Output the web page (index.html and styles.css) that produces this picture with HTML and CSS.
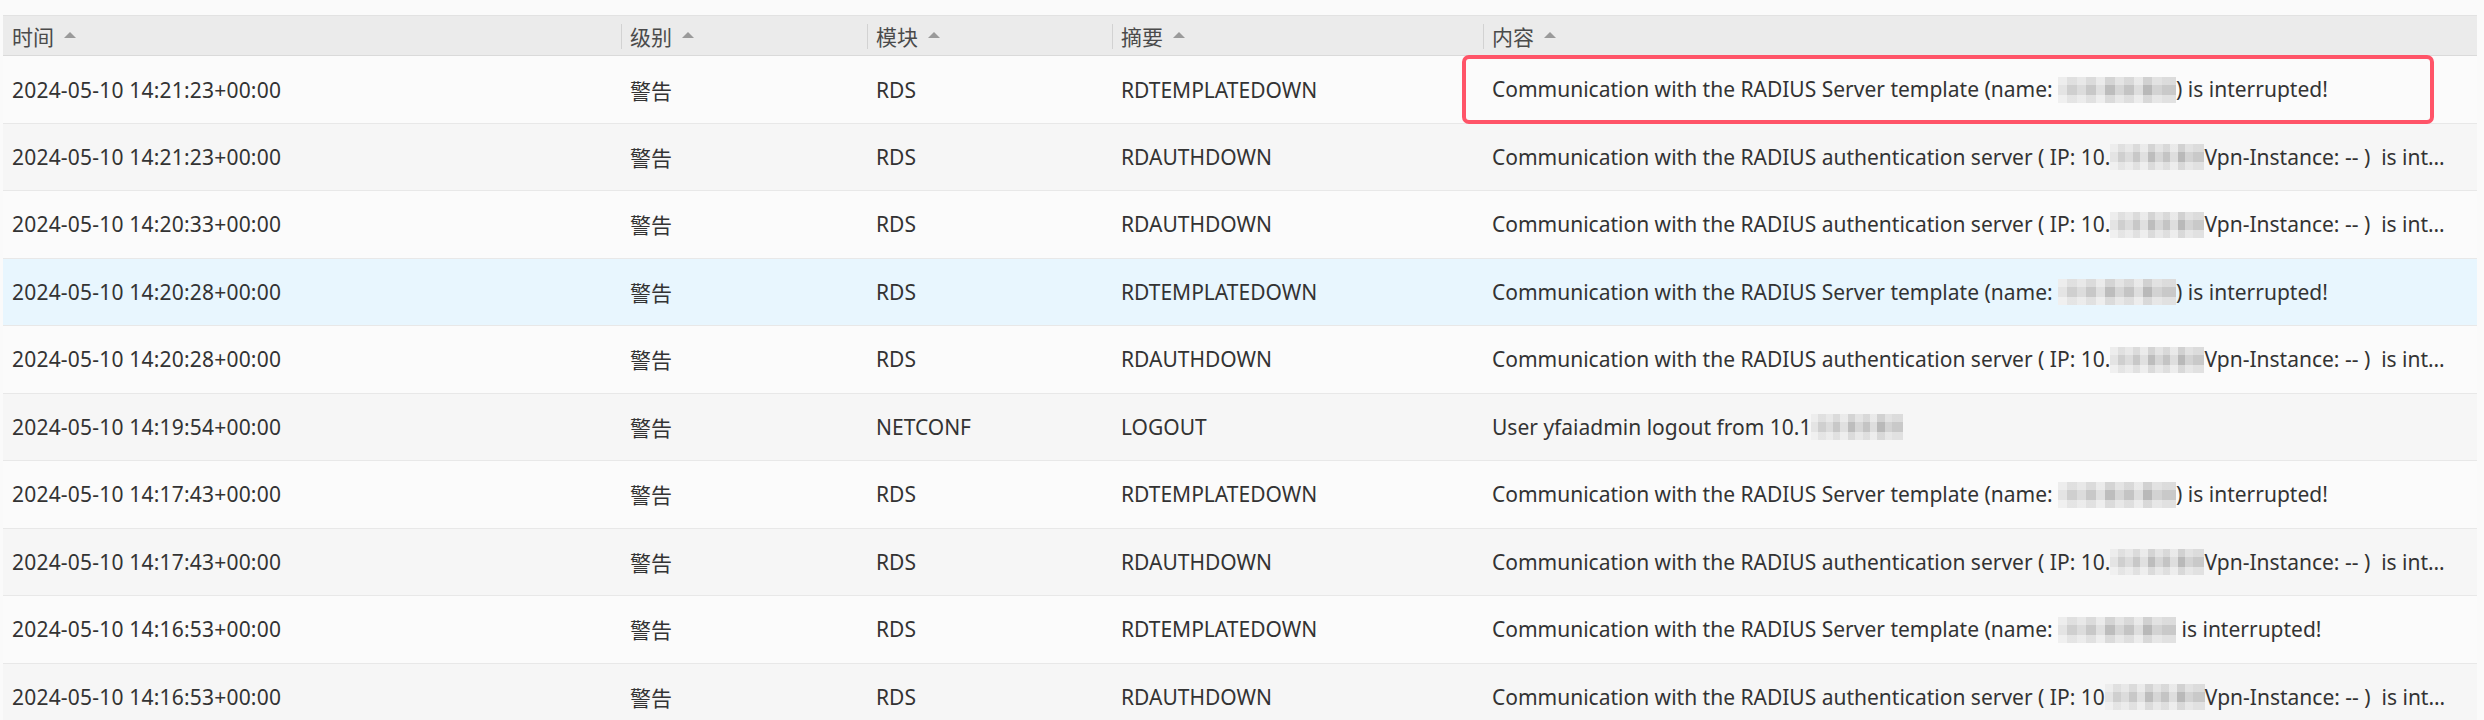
FILE: index.html
```html
<!DOCTYPE html>
<html lang="zh-CN">
<head>
<meta charset="utf-8">
<title>日志</title>
<link rel="stylesheet" href="styles.css">
</head>
<body>
<div class="page">
  <div class="table">
    <div class="thead">
      <div class="th"><span class="label">时间</span><span class="sort"></span></div>
      <div class="th sep"><span class="label">级别</span><span class="sort"></span></div>
      <div class="th sep"><span class="label">模块</span><span class="sort"></span></div>
      <div class="th sep"><span class="label">摘要</span><span class="sort"></span></div>
      <div class="th sep"><span class="label">内容</span><span class="sort"></span></div>
    </div>
    <div class="tbody">
      <div class="row odd">
        <div class="td">2024-05-10 14:21:23+00:00</div><div class="td">警告</div><div class="td">RDS</div><div class="td">RDTEMPLATEDOWN</div>
        <div class="td content marked">Communication with the RADIUS Server template (name: <span class="blur b-name"></span>) is interrupted!<div class="callout"></div></div>
      </div>
      <div class="row even">
        <div class="td">2024-05-10 14:21:23+00:00</div><div class="td">警告</div><div class="td">RDS</div><div class="td">RDAUTHDOWN</div>
        <div class="td content">Communication with the RADIUS authentication server ( IP: 10.<span class="blur b-ip"></span>Vpn-Instance: --&nbsp;)&nbsp; is interrupted!</div>
      </div>
      <div class="row odd">
        <div class="td">2024-05-10 14:20:33+00:00</div><div class="td">警告</div><div class="td">RDS</div><div class="td">RDAUTHDOWN</div>
        <div class="td content">Communication with the RADIUS authentication server ( IP: 10.<span class="blur b-ip"></span>Vpn-Instance: --&nbsp;)&nbsp; is interrupted!</div>
      </div>
      <div class="row even active">
        <div class="td">2024-05-10 14:20:28+00:00</div><div class="td">警告</div><div class="td">RDS</div><div class="td">RDTEMPLATEDOWN</div>
        <div class="td content">Communication with the RADIUS Server template (name: <span class="blur b-name"></span>) is interrupted!</div>
      </div>
      <div class="row odd">
        <div class="td">2024-05-10 14:20:28+00:00</div><div class="td">警告</div><div class="td">RDS</div><div class="td">RDAUTHDOWN</div>
        <div class="td content">Communication with the RADIUS authentication server ( IP: 10.<span class="blur b-ip"></span>Vpn-Instance: --&nbsp;)&nbsp; is interrupted!</div>
      </div>
      <div class="row even">
        <div class="td">2024-05-10 14:19:54+00:00</div><div class="td">警告</div><div class="td">NETCONF</div><div class="td">LOGOUT</div>
        <div class="td content">User yfaiadmin logout from 10.1<span class="blur b-user"></span></div>
      </div>
      <div class="row odd">
        <div class="td">2024-05-10 14:17:43+00:00</div><div class="td">警告</div><div class="td">RDS</div><div class="td">RDTEMPLATEDOWN</div>
        <div class="td content">Communication with the RADIUS Server template (name: <span class="blur b-name"></span>) is interrupted!</div>
      </div>
      <div class="row even">
        <div class="td">2024-05-10 14:17:43+00:00</div><div class="td">警告</div><div class="td">RDS</div><div class="td">RDAUTHDOWN</div>
        <div class="td content">Communication with the RADIUS authentication server ( IP: 10.<span class="blur b-ip"></span>Vpn-Instance: --&nbsp;)&nbsp; is interrupted!</div>
      </div>
      <div class="row odd">
        <div class="td">2024-05-10 14:16:53+00:00</div><div class="td">警告</div><div class="td">RDS</div><div class="td">RDTEMPLATEDOWN</div>
        <div class="td content">Communication with the RADIUS Server template (name: <span class="blur b-name"></span> is interrupted!</div>
      </div>
      <div class="row even">
        <div class="td">2024-05-10 14:16:53+00:00</div><div class="td">警告</div><div class="td">RDS</div><div class="td">RDAUTHDOWN</div>
        <div class="td content">Communication with the RADIUS authentication server ( IP: 10<span class="blur b-ip2"></span>Vpn-Instance: --&nbsp;)&nbsp; is interrupted!</div>
      </div>
    </div>
  </div>
</div>
</body>
</html>
```
FILE: styles.css
```css
* { box-sizing: border-box; }
html, body { margin: 0; padding: 0; }
body {
  background: #fafafa;
  font-family: "Noto Sans", "Noto Sans CJK SC", sans-serif;
  font-size: 21px;
  color: #333333;
  overflow: hidden;
}
.page {
  padding: 15px 7px 0 3px;
}
.table {
  width: 2474px;
}
.thead, .row {
  display: grid;
  grid-template-columns: 618px 246px 245px 371px 994px;
}
.thead {
  height: 41px;
  background: #ebebeb;
  border-top: 1px solid #e2e2e2;
  border-bottom: 1px solid #dadada;
  color: #4a4a4a;
}
.th {
  display: flex;
  align-items: center;
  gap: 10px;
  padding-left: 9px;
  position: relative;
}
.th.sep::before {
  content: "";
  position: absolute;
  left: 0;
  top: 8px;
  width: 1px;
  height: 25px;
  background: #d2d2d2;
}
.sort {
  width: 0;
  height: 0;
  border-left: 6px solid transparent;
  border-right: 6px solid transparent;
  border-bottom: 6px solid #9a9a9a;
  margin-top: -1px;
}
.row {
  height: 67.5px;
  border-bottom: 1px solid #e8e8e8;
}
.row.odd { background: #fbfbfb; }
.row.even { background: #f6f6f6; }
.row.active { background: #e8f6fe; }
.td {
  display: flex;
  align-items: center;
  padding-left: 9px;
  white-space: nowrap;
  overflow: hidden;
}
.td:first-child { letter-spacing: 0.2px; }
.td.content {
  display: block;
  line-height: 67px;
  padding-right: 22px;
  text-overflow: ellipsis;
}
.td.marked {
  overflow: visible;
  position: relative;
}
.callout {
  position: absolute;
  left: -21px;
  right: 43px;
  top: -1px;
  bottom: -1px;
  border: 4px solid #ff5468;
  border-radius: 7px;
  pointer-events: none;
}
.blur {
  display: inline-block;
  height: 26px;
  vertical-align: middle;
  margin-top: -3px;
  background:
    linear-gradient(180deg, rgba(255,255,255,0.35) 0 30%, rgba(255,255,255,0) 30% 70%, rgba(255,255,255,0.45) 70% 100%),
    linear-gradient(90deg, #e4e4e4 0 8%, #cfcfcf 8% 16%, #dcdcdc 16% 24%, #c8c8c8 24% 32%, #e0e0e0 32% 40%, #bdbdbd 40% 48%, #d6d6d6 48% 56%, #c4c4c4 56% 64%, #dedede 64% 72%, #b9b9b9 72% 80%, #d3d3d3 80% 88%, #c9c9c9 88% 100%);
}
.b-name { width: 118px; }
.b-ip { width: 94px; }
.b-ip2 { width: 100px; }
.b-user { width: 92px; }
```
